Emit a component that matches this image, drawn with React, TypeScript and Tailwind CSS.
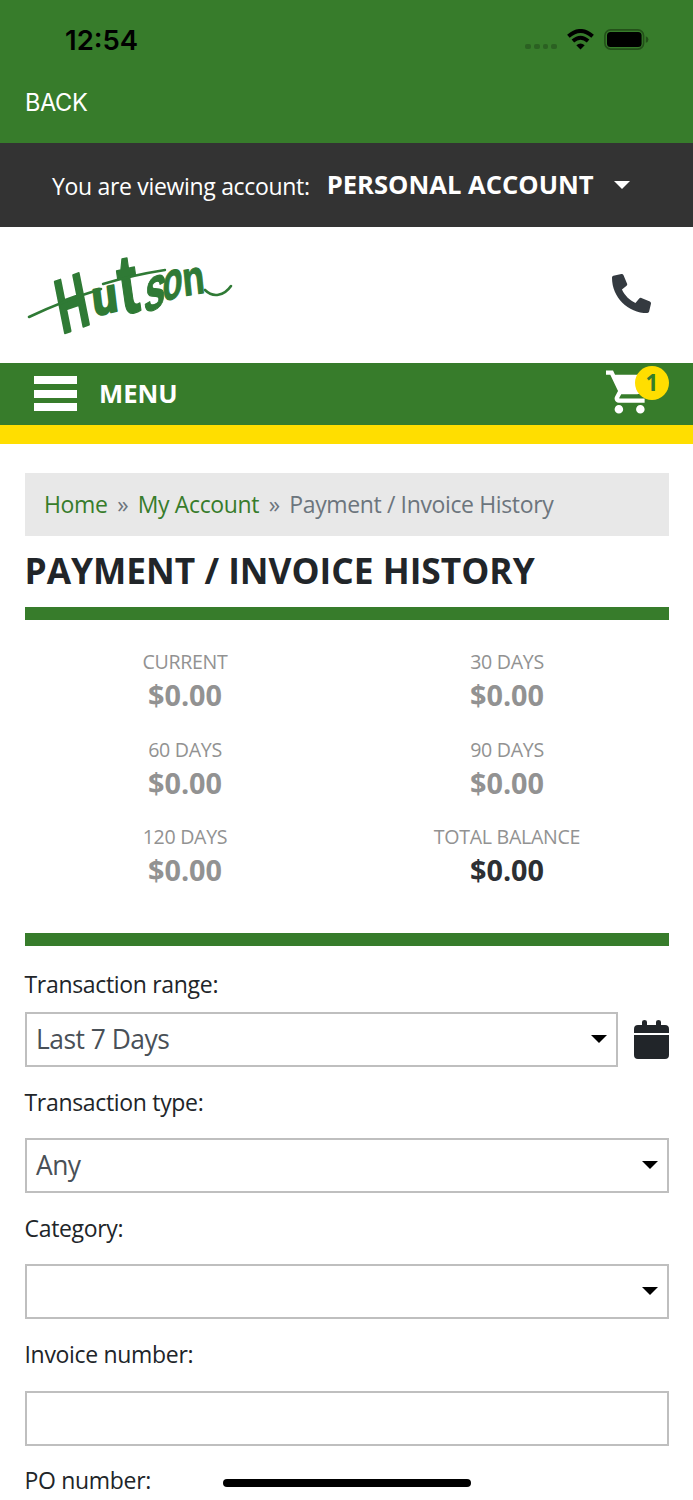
import React from "react";

const Caret = ({ className = "" }: { className?: string }) => (
  <svg viewBox="0 0 16 8" className={`w-4 h-2 shrink-0 ${className}`} fill="currentColor">
    <path d="M0 0h16L8 8z" />
  </svg>
);

const Logo = () => (
  <svg
    viewBox="0 0 206 84"
    className="w-[206px] h-[84px] shrink-0 overflow-visible"
    fill="#2f7a35"
    stroke="#2f7a35"
    fontFamily="'Liberation Sans', sans-serif"
    fontWeight="700"
    aria-label="Hutson"
  >
    <g strokeWidth="2.6" strokeLinejoin="round">
      <text transform="matrix(.56 -.2 .2 1 35 81)" fontSize="74">H</text>
      <text transform="matrix(.86 -.2 .12 1 67 63)" fontSize="48">u</text>
    </g>
    <g strokeWidth="1.2" strokeLinejoin="round">
      <text transform="matrix(.9 -.2 .18 1.26 95 62)" fontSize="66">t</text>
      <text transform="matrix(.64 -.2 -.1 1.05 116 60)" fontSize="60">s</text>
      <text transform="matrix(.6 -.18 -.05 1 135 49)" fontSize="54">o</text>
      <text transform="matrix(.74 -.12 .1 1 157 43)" fontSize="48">n</text>
    </g>
    <g fill="none" strokeLinecap="round">
      <path d="M2 64Q38 47 74 36" strokeWidth="2.6" />
      <path d="M76 31Q106 22 138 17" strokeWidth="2.4" />
      <path d="M178 37C186 45 197 43 204 33" strokeWidth="2.6" />
    </g>
  </svg>
);

const balances = [
  ["CURRENT", "$0.00"],
  ["30 DAYS", "$0.00"],
  ["60 DAYS", "$0.00"],
  ["90 DAYS", "$0.00"],
  ["120 DAYS", "$0.00"],
  ["TOTAL BALANCE", "$0.00"],
];

const Label = ({ children }: { children: React.ReactNode }) => (
  <div className="-ml-[0.5px] h-8 leading-[31px] text-[23px] tracking-[-0.32px] text-[#212529]">{children}</div>
);

const Field = ({ value, select }: { value?: string; select?: boolean }) => (
  <div className="flex h-[55px] grow items-center justify-between border-2 border-[#bfbfbf] pl-[9px] pr-[9px] text-[26.4px] tracking-[-0.5px] text-[#495057]">
    <span className="mt-px">{value}</span>
    {select && <Caret className="text-black mt-[-1px]" />}
  </div>
);

export default function App() {
  return (
    <div className="flex h-[1500px] w-[693px] flex-col overflow-hidden bg-white font-['Open_Sans',sans-serif] text-[#212529]">
      <header className="h-[143px] shrink-0 bg-[#377c2b]">
        <div className="flex h-[79px] items-center justify-between pl-[65px] pr-[44px]">
          <span className="mt-[2px] font-['Inter',sans-serif] text-[27.5px] font-semibold text-black">12:54</span>
          <div className="flex items-center">
            <div className="mt-[14px] flex gap-[3px]">
              {[0, 1, 2, 3].map((i) => (
                <i key={i} className="block size-[5.7px] rounded-[2px] bg-[#2b6122]" />
              ))}
            </div>
            <svg viewBox="0 0 27 21" className="ml-[10px] h-[21px] w-[27px]" fill="none" stroke="#000" strokeWidth="3.9">
              <path d="M1.4 7.2Q13.5-3.3 25.6 7.2M5.9 12Q13.5 5.5 21.1 12" />
              <path d="M13.5 20.500l-4.200-4.300q4.200-3.500 8.400 0z" fill="#000" stroke="none" />
            </svg>
            <svg viewBox="0 0 45 21" className="ml-[10px] h-[21px] w-[45px]">
              <rect x=".9" y=".9" width="38.7" height="19.2" rx="5.8" fill="none" stroke="#235019" strokeWidth="1.6" />
              <rect x="3" y="3" width="34.6" height="15" rx="3.5" />
              <path d="M41.8 7.2q2.6.8 2.6 3.3t-2.6 3.3z" fill="#235019" />
            </svg>
          </div>
        </div>
        <div className="pl-[25px] pt-px font-['Inter',sans-serif] text-[23.6px] leading-[46px] tracking-[-0.4px] text-white">BACK</div>
      </header>

      <div className="flex h-[84px] shrink-0 items-center bg-[#333] pl-[52px] text-white">
        <span className="mt-[2px] text-[23px] tracking-[-0.32px]">You are viewing account:</span>
        <span className="ml-[17px] mt-px text-[25.6px] font-bold">PERSONAL ACCOUNT</span>
        <Caret className="ml-5" />
      </div>

      <div className="flex h-[136px] shrink-0 items-center justify-between pl-[27px] pr-[42px]">
        <Logo />
        <svg viewBox="0 0 512 512" className="mt-[-3px] size-[39px]" fill="#343a40">
          <path d="M493.400 24.600l-104-24c-11.300-2.600-22.900 3.300-27.500 13.900l-48 112c-4.200 9.800-1.400 21.300 6.900 28l60.600 49.600c-36 76.700-98.900 140.500-177.200 177.200l-49.600-60.600c-6.800-8.300-18.200-11.100-28-6.900l-112 48C3.900 366.500-2 378.100.6 389.400l24 104C27.100 504.200 36.700 512 48 512c256.100 0 464-207.500 464-464 0-11.200-7.700-20.900-18.600-23.400z" transform="matrix(-1 0 0 1 512 0)" />
        </svg>
      </div>

      <nav className="flex h-[61.500px] shrink-0 items-center justify-between bg-[#377c2b] pl-[34px] pr-[24px] text-white">
        <div className="flex items-center">
          <div className="flex flex-col gap-[5.500px]">
            <i className="block h-2 w-[43px] bg-white" />
            <i className="block h-2 w-[43px] bg-white" />
            <i className="block h-2 w-[43px] bg-white" />
          </div>
          <span className="ml-[22px] mt-px text-[25.6px] font-bold">MENU</span>
        </div>
        <div className="relative h-[61px] w-[63px]">
          <svg viewBox="1 2 20.500 20" className="absolute left-0 top-[7px] h-[44px] w-[44px]" fill="#fff">
            <path d="M7 18c-1.100 0-1.990.9-1.990 2S5.900 22 7 22s2-.9 2-2-.9-2-2-2zM1 2v2h2l3.600 7.590-1.350 2.450c-.16.280-.25.610-.25.960 0 1.100.9 2 2 2h12v-2H7.420c-.140 0-.25-.110-.25-.250l.030-.120.900-1.630h7.450c.750 0 1.410-.410 1.750-1.030l3.580-6.490A1 1 0 0020 4H5.210l-.940-2H1zm16 16c-1.100 0-1.990.900-1.990 2s.890 2 1.990 2 2-.9 2-2-.9-2-2-2z" />
          </svg>
          <span className="absolute right-0 top-[3px] flex size-[34px] items-center justify-center rounded-full bg-[#ffde00] pb-px text-[22.4px] font-bold text-[#377c2b]">1</span>
        </div>
      </nav>
      <div className="h-[19.500px] shrink-0 bg-[#ffde00]" />

      <main className="flex flex-col pl-[25px] pr-[24px] pt-[29px]">
        <div className="flex h-[63px] items-center bg-[#e8e8e8] pb-px pl-[19px] text-[23px] tracking-[-0.37px] text-[#6c757d]">
          <span className="text-[#377c2b]">Home</span>
          <span className="mx-[9.6px]">»</span>
          <span className="text-[#377c2b]">My Account</span>
          <span className="mx-[9.6px]">»</span>
          <span>Payment / Invoice History</span>
        </div>
        <h1 className="-ml-[0.5px] h-[71px] whitespace-nowrap text-[35.300px] font-bold leading-[68px]">PAYMENT / INVOICE HISTORY</h1>
        <div className="h-[13px] bg-[#377c2b]" />
        <div className="-ml-px mr-px grid h-[313px] grid-cols-2 content-start pt-[26px] text-center">
          {balances.map(([name, amount], i) => (
            <div key={name} className={i === 5 ? "h-[87.500px] text-[#2d2f33]" : "h-[87.500px] text-[#929292]"}>
              <div className="text-[19.600px] leading-[32px] tracking-[-0.3px] text-[#929292]">{name}</div>
              <div className="text-[28.800px] font-bold leading-[34px]">{amount}</div>
            </div>
          ))}
        </div>
        <div className="h-[13px] bg-[#377c2b]" />

        <div className="pt-[23px]"><Label>Transaction range:</Label></div>
        <div className="mt-[11px] flex items-center">
          <Field value="Last 7 Days" select />
          <svg viewBox="0 0 35 40" className="ml-4 h-10 w-[35px] shrink-0" fill="#212529">
            <path d="M0 13V9q0-4 4-4h4V2q0-2 2.500-2T13 2v3h9V2q0-2 2.500-2T27 2v3h4q4 0 4 4v4zM0 15h35v20q0 4-4 4H4q-4 0-4-4z" />
          </svg>
        </div>
        <div className="mt-[19.500px]"><Label>Transaction type:</Label></div>
        <div className="mt-[19.500px] flex"><Field value="Any" select /></div>
        <div className="mt-[19.500px]"><Label>Category:</Label></div>
        <div className="mt-[19.500px] flex"><Field select /></div>
        <div className="mt-[19.500px]"><Label>Invoice number:</Label></div>
        <div className="mt-[20px] flex"><Field /></div>
        <div className="mt-[19px] flex">
          <div className="w-[198px]"><Label>PO number:</Label></div>
          <div className="mt-[14px] h-2 w-[248px] rounded-full bg-black" />
        </div>
      </main>
    </div>
  );
}
